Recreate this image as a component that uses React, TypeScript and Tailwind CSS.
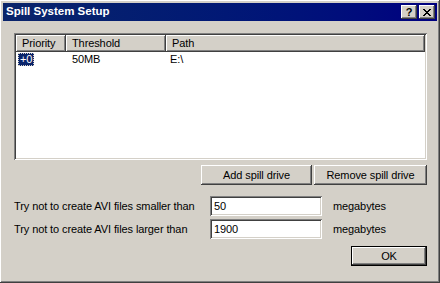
const raised =
  "shadow-[inset_-1px_-1px_#404040,inset_1px_1px_#ffffff,inset_-2px_-2px_#808080,inset_2px_2px_#d4d0c8]"
const sunken =
  "shadow-[inset_1px_1px_#808080,inset_-1px_-1px_#ffffff,inset_2px_2px_#404040,inset_-2px_-2px_#d4d0c8]"
const header =
  "shadow-[inset_-1px_-1px_#404040,inset_1px_1px_#ffffff,inset_-2px_-2px_#808080]"

function TitleButton({ children }: { children: React.ReactNode }) {
  return (
    <div
      className={`w-[16px] h-[14px] bg-[#d4d0c8] flex items-center justify-center text-black text-[11px] font-bold leading-none ${raised}`}>
      {children}
    </div>
  )
}

function Button({ label, isDefault, className }: { label: string; isDefault?: boolean; className: string }) {
  return (
    <div
      className={`${className} ${isDefault ? "border border-black" : ""} bg-[#d4d0c8] flex`}>
      <div className={`flex-1 flex items-center justify-center ${raised}`}>{label}</div>
    </div>
  )
}

function Field({ value }: { value: string }) {
  return (
    <div className={`w-[112px] h-[20px] bg-white flex items-center px-[4px] ${sunken}`}>{value}</div>
  )
}

export default function App() {
  return (
    <div
      className={`w-[440px] h-[283px] bg-[#d4d0c8] p-[3px] flex flex-col text-[11px] tracking-[-0.1px] text-black leading-none ${raised}`}
      style={{ fontFamily: '"Liberation Sans", Arial, sans-serif' }}>
      <div className="h-[18px] flex items-center pl-[3px] pr-[2px] bg-gradient-to-r from-[#0a246a] to-[#000080]">
        <span className="text-white font-bold text-[11.5px] tracking-normal flex-1">Spill System Setup</span>
        <div className="flex gap-[2px]">
          <TitleButton>?</TitleButton>
          <TitleButton>
            <svg width="8" height="7" viewBox="0 0 8 7">
              <path d="M0 0L7 7M1 0L8 7M7 0L0 7M8 0L1 7" stroke="black" strokeWidth="1" />
            </svg>
          </TitleButton>
        </div>
      </div>

      <div className="flex flex-col pl-[11px] pr-[10px] pt-[12px]">
        <div className={`h-[127px] bg-white p-[2px] flex flex-col ${sunken}`}>
          <div className="h-[17px] flex bg-[#d4d0c8]">
            <div className={`w-[50px] flex items-center pl-[6px] ${header}`}>Priority</div>
            <div className={`w-[100px] flex items-center pl-[6px] ${header}`}>Threshold</div>
            <div className={`flex-1 flex items-center pl-[6px] ${header}`}>Path</div>
          </div>
          <div className="h-[14px] flex items-center">
            <div className="w-[50px] pl-[2px]">
              <span className="inline-flex items-center h-[13px] px-[2px] bg-[#0a246a] text-white outline outline-1 outline-dotted outline-[#d4d0c8] -outline-offset-1">
                +0
              </span>
            </div>
            <div className="w-[100px] pl-[6px]">50MB</div>
            <div className="flex-1 pl-[4px]">E:\</div>
          </div>
        </div>

        <div className="flex justify-end gap-[2px] mt-[5px]">
          <Button label="Add spill drive" className="w-[111px] h-[20px]" />
          <Button label="Remove spill drive" className="w-[113px] h-[20px]" />
        </div>

        <div className="flex items-center mt-[11px]">
          <span className="w-[196px]">Try not to create AVI files smaller than</span>
          <Field value="50" />
          <span className="ml-[11px]">megabytes</span>
        </div>
        <div className="flex items-center mt-[3px]">
          <span className="w-[196px]">Try not to create AVI files larger than</span>
          <Field value="1900" />
          <span className="ml-[11px]">megabytes</span>
        </div>

        <div className="flex justify-end mt-[7px]">
          <Button label="OK" isDefault className="w-[76px] h-[20px]" />
        </div>
      </div>
    </div>
  )
}
